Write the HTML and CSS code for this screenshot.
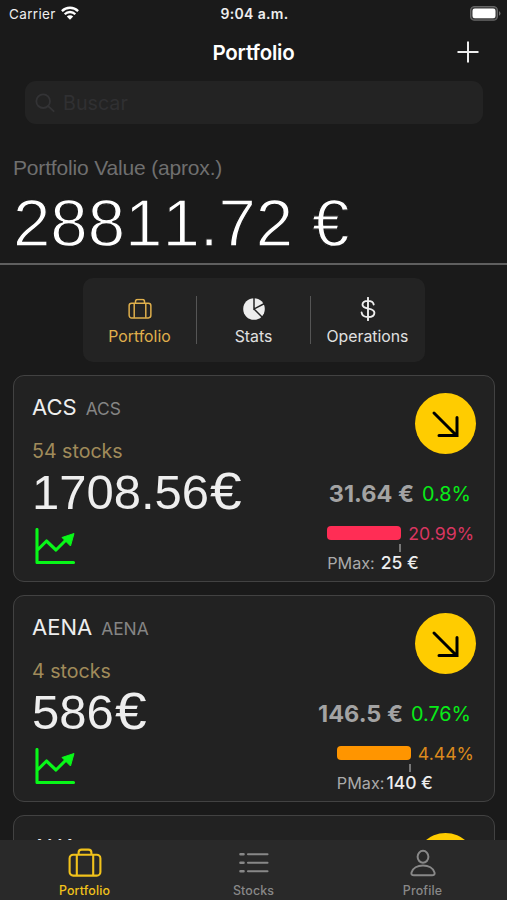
FILE: index.html
```html
<!DOCTYPE html>
<html lang="es">
<head>
<meta charset="utf-8">
<title>Portfolio</title>
<link rel="stylesheet" href="styles.css">
</head>
<body>
<svg class="defs" aria-hidden="true">
  <symbol id="case" viewBox="0 0 34 30"><g fill="none" stroke="currentColor" stroke-width="2.1"><rect x="1.6" y="6.8" width="30.8" height="20.8" rx="3.6"/><path d="M8.800 7v20.500M25.200 7v20.500M10.600 6.500V4.600a3 3 0 0 1 3-3h6.800a3 3 0 0 1 3 3v1.900"/></g></symbol>
  <symbol id="chart" viewBox="0 0 42 36"><path d="M3 1.500v33H39.500M3.500 22l9-9 9.500 9 12-12" fill="none" stroke="currentColor" stroke-width="3.100" stroke-linecap="round" stroke-linejoin="round"/><path d="M40 5.500 28 9.500l8.500 8.500z" fill="currentColor" stroke="currentColor" stroke-width="1" stroke-linejoin="round"/></symbol>
  <symbol id="arrow" viewBox="0 0 61 61"><path d="M19 20 41.500 42.500M42 24.500v18H24" fill="none" stroke="#000" stroke-width="3" stroke-linecap="round"/></symbol>
</svg>
<div class="phone">
  <header>
    <div class="status">
      <div class="carrier"><span>Carrier</span>
        <svg class="wifi" viewBox="0 0 18 14"><g fill="none" stroke="#fff" stroke-width="2.300"><path d="M.9 5.100a11.500 11.500 0 0 1 16.200 0M3.700 8.200a7.500 7.500 0 0 1 10.600 0"/></g><path d="M9 13.800 5.800 10.500a4.600 4.600 0 0 1 6.400 0z" fill="#fff"/></svg>
      </div>
      <div class="time">9:04 a.m.</div>
      <svg class="battery" viewBox="0 0 31 15"><rect x=".6" y=".6" width="26.800" height="13.600" rx="4" fill="#3a3a3a" stroke="#666" stroke-width="1.300"/><rect x="2.500" y="2.500" width="23" height="9.800" rx="2.300" fill="#fff"/><path d="M29 5q3 2.400 0 4.800z" fill="#717171"/></svg>
    </div>
    <div class="nav"><h1>Portfolio</h1><svg class="plus" viewBox="0 0 22 22"><path d="M11 .5v21M.5 11h21" stroke="#eee" stroke-width="2"/></svg></div>
    <div class="search"><svg viewBox="0 0 22 22"><g fill="none" stroke="#333335" stroke-width="2" stroke-linecap="round"><circle cx="9" cy="9" r="7.500"/><path d="m14.500 14.500 6 5.500"/></g></svg><span>Buscar</span></div>
  </header>
  <section class="summary">
    <div class="label">Portfolio Value (aprox.)</div>
    <div class="total">28811.72 €</div>
  </section>
  <nav class="segments">
    <div class="segment active"><svg viewBox="0 0 34 30"><use href="#case"/></svg><span>Portfolio</span></div>
    <div class="segment"><svg viewBox="0 0 24 24"><circle cx="12" cy="12" r="10.800" fill="#ededed"/><path d="M12 0v12L22.500 6.500M12 12l8.500 8.500" fill="none" stroke="#232323" stroke-width="1.500"/></svg><span>Stats</span></div>
    <div class="segment"><svg viewBox="0 0 24 24"><path d="M12 .8v22.400M17.700 7.500C17.200 5 15 3.900 12 3.900c-3.300 0-5.500 1.500-5.500 3.900 0 5.300 11.900 2.300 11.900 7.900 0 2.700-2.600 4.300-6.300 4.300-3.700 0-6.200-1.600-6.500-4.500" fill="none" stroke="#ededed" stroke-width="1.900" stroke-linecap="round"/></svg><span>Operations</span></div>
  </nav>
  <main>
    <article class="card">
      <div class="left">
        <div class="name"><b>ACS</b><span>ACS</span></div>
        <div class="stocks">54 stocks</div>
        <div class="value">1708.56<span>€</span></div>
        <svg class="trend"><use href="#chart"/></svg>
      </div>
      <div class="right">
        <svg class="badge"><use href="#arrow"/></svg>
        <div class="price"><b>31.64 €</b><span>0.8%</span></div>
        <div class="gauge red">
          <div class="meter"><i></i><span>20.99%</span></div>
          <div class="tick"></div>
          <div class="pmax"><span>PMax:</span><b>25 €</b></div>
        </div>
      </div>
    </article>
    <article class="card">
      <div class="left">
        <div class="name"><b>AENA</b><span>AENA</span></div>
        <div class="stocks">4 stocks</div>
        <div class="value">586<span>€</span></div>
        <svg class="trend"><use href="#chart"/></svg>
      </div>
      <div class="right">
        <svg class="badge"><use href="#arrow"/></svg>
        <div class="price"><b>146.5 €</b><span>0.76%</span></div>
        <div class="gauge orange">
          <div class="meter"><i></i><span>4.44%</span></div>
          <div class="tick"></div>
          <div class="pmax tight"><span>PMax:</span><b>140 €</b></div>
        </div>
      </div>
    </article>
    <article class="card">
      <div class="left"><div class="name"><b>AXA</b></div></div>
      <div class="right"><svg class="badge"><use href="#arrow"/></svg></div>
    </article>
  </main>
  <footer class="tabs">
    <div class="tab active"><svg viewBox="0 0 34 30"><use href="#case"/></svg><span>Portfolio</span></div>
    <div class="tab"><svg viewBox="0 0 34 30"><path d="M3.500 6.300h3M3.500 14.800h3M3.500 23.300h3" stroke="currentColor" stroke-width="2.600" stroke-linecap="round"/><path d="M11 6.300h19.500M11 14.800h19.500M11 23.300h19.500" stroke="currentColor" stroke-width="2.100" stroke-linecap="round"/></svg><span>Stocks</span></div>
    <div class="tab"><svg viewBox="0 0 34 30"><g fill="none" stroke="currentColor" stroke-width="2"><ellipse cx="17" cy="8.800" rx="5.400" ry="6"/><path d="M8 27.300h18c2 0 3-1 2.500-2.800-1.300-4.300-6-6.900-11.500-6.900S6.800 20.200 5.500 24.500C5 26.300 6 27.300 8 27.300z"/></g></svg><span>Profile</span></div>
  </footer>
</div>
</body>
</html>
```
FILE: styles.css
```css
* { box-sizing: border-box; }
body { margin: 0; background: #1a1a1a; font-family: Inter, "Liberation Sans", sans-serif; color: #eee; }
b { font-weight: inherit; }
svg { display: block; flex: none; }
span { white-space: nowrap; }
.defs { display: none; }
.phone { width: 507px; height: 900px; overflow: hidden; display: flex; flex-direction: column; background: #1a1a1a; }

header { height: 140px; flex: none; }
.status { height: 28px; display: grid; grid-template-columns: 1fr auto 1fr; align-items: center; padding: 0 6px 0 9px; font-size: 13.500px; }
.carrier { display: flex; align-items: center; gap: 5px; letter-spacing: 0.350px; }
.wifi { width: 18px; height: 14px; margin-top: -2px; }
.time { font-size: 14px; line-height: 17px; font-weight: 600; letter-spacing: 0.350px; margin: -2px 1px 0 0; }
.battery { width: 31px; height: 15px; justify-self: end; margin-top: -2px; }
.nav { height: 53px; padding-top: 3px; display: grid; grid-template-columns: 1fr auto 1fr; }
.nav h1 { grid-column: 2; margin: 0; font-size: 20.500px; line-height: 43px; font-weight: 600; letter-spacing: -0.200px; color: #fff; }
.plus { width: 22px; height: 22px; justify-self: end; margin: 10px 28px 0 0; }
.search { height: 43px; margin: 0 24px 0 25px; border-radius: 11px; background: #232323; color: #303032; display: flex; align-items: center; gap: 8px; padding-left: 10px; font-size: 19.700px; }
.search svg { width: 20px; height: 20px; }

.summary { height: 125px; flex: none; padding: 15px 13px 0; border-bottom: 2px solid #5f5f5f; font-family: "Liberation Sans", sans-serif; }
.label { font-size: 21px; line-height: 26px; letter-spacing: -0.170px; color: #6f6f6f; white-space: nowrap; }
.total { font-size: 67.200px; line-height: 74px; margin-top: 5px; color: #fff; font-kerning: none; -webkit-text-stroke: 1.300px #1a1a1a; white-space: nowrap; }

.segments { width: 342px; height: 84px; flex: none; margin: 13px 0 13px 83px; border-radius: 10px; background: #232323; display: grid; grid-template-columns: repeat(3, 1fr); align-items: center; }
.segment { height: 48px; display: flex; flex-direction: column; align-items: center; font-size: 15.800px; color: #e0e0e0; border-right: 1px solid #555; }
.segment:last-child { border-right-color: transparent; }
.segment svg { width: 24px; height: 24px; margin: 1px 0 5px; }
.segment span { line-height: 22px; }
.segment.active { color: #e0b04c; }

main { flex: 1; min-height: 0; overflow: hidden; padding: 0 12px 0 13px; display: flex; flex-direction: column; gap: 13px; }
.card { height: 207px; flex: none; border: 1.500px solid #424242; border-radius: 11px; background: #222; display: flex; justify-content: space-between; padding: 17px 18px 0 18px; }
.left { padding-top: 1px; }
.name { display: flex; align-items: baseline; gap: 9px; line-height: 26px; }
.name b { font-size: 22px; font-weight: 400; }
.name span { font-size: 17.400px; color: #858585; }
.stocks { margin-top: 16px; font-size: 19.600px; line-height: 26px; color: #a08b5a; }
.value { font-family: "Liberation Sans", sans-serif; font-size: 49px; line-height: 54px; height: 54px; margin-top: 1px; color: #eee; font-kerning: none; }
.value span { display: inline-block; font-size: 51px; line-height: 1; margin-left: 1px; transform: scaleX(1.120); transform-origin: left; }
.trend { width: 42px; height: 36px; margin: 9px 0 0 2px; color: #08f818; }
.right { display: flex; flex-direction: column; align-items: flex-end; }
.badge { width: 61px; height: 61px; border-radius: 50%; background: #fc0; }
.price { display: flex; align-items: center; gap: 8px; margin: 26px 5px 0 0; line-height: 28px; }
.price b { font-size: 23.500px; font-weight: 700; color: #a3a3a3; }
.price span { font-size: 19.800px; color: #08ec18; }
.gauge { margin: 13px 2px 0 0; }
.meter { display: flex; align-items: center; gap: 7px; height: 24px; font-size: 17.700px; }
.meter i { width: 74px; height: 14px; border-radius: 4px; background: currentColor; }
.red { color: #ff2d55; }
.red .meter span { color: #d93660; }
.orange { color: #ff9500; }
.orange .meter span { color: #dc8a1d; }
.tick { width: 2px; height: 8px; margin: -1px 0 0 72px; background: #777; }
.pmax { display: flex; align-items: baseline; gap: 6px; font-size: 16.200px; line-height: 22px; color: #aaa; }
.pmax.tight { gap: 2px; }
.pmax b { color: #eee; font-weight: 500; font-size: 17.500px; }

.tabs { height: 60px; flex: none; background: #292929; display: grid; grid-template-columns: repeat(3, 1fr); }
.tab { display: flex; flex-direction: column; align-items: center; padding-top: 8px; font-size: 12.400px; font-weight: 500; letter-spacing: 0.150px; color: #888; }
.tab svg { width: 34px; height: 30px; }
.tab span { line-height: 16px; margin-top: 5px; }
.tab.active { color: #f1c21b; }
```
